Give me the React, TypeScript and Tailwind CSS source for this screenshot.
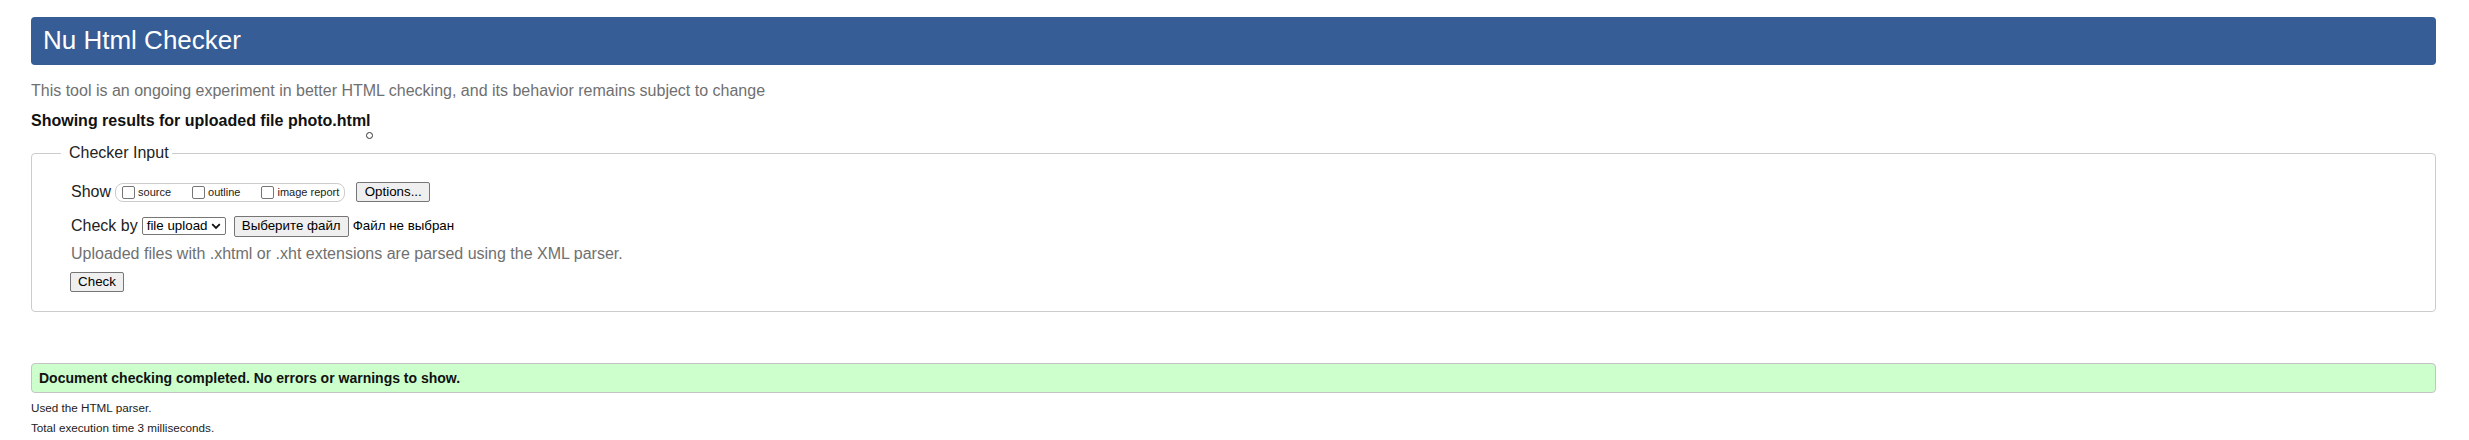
import React from "react";

function Checkbox() {
  return <span className="inline-block w-[13px] h-[13px] border border-[#767676] rounded-[2px] bg-white shrink-0" />;
}

function Btn({ children, className = "" }: { children: React.ReactNode; className?: string }) {
  return (
    <span
      className={
        "inline-flex items-center justify-center bg-[#efefef] border border-[#767676] rounded-[2px] text-[13.33px] text-black px-[7px] " +
        className
      }
    >
      {children}
    </span>
  );
}

export default function App() {
  return (
    <div className="relative min-h-[440px] bg-white pt-[17px] pl-[31px] pr-[33px] font-['Liberation_Sans',Arial,sans-serif] text-[#222]">
      <h1 className="h-[48px] flex items-center pb-[2px] pl-[12px] bg-[#365d95] rounded-[4px] text-white text-[26px] font-normal">
        Nu Html Checker
      </h1>
      <p className="mt-[16px] text-[16px] leading-[20px] text-[#707070]">
        This tool is an ongoing experiment in better HTML checking, and its behavior remains subject to change
      </p>
      <p className="mt-[10px] text-[16px] leading-[20px] font-bold text-[#111]">
        Showing results for uploaded file photo.html
      </p>

      <fieldset className="mt-[12px] p-0 border border-[#cccccc] rounded-[4px]">
        <legend className="ml-[29px] pl-[8px] pr-[3px] text-[16px] leading-[20px] text-[#222]">Checker Input</legend>
        <div className="pt-[17px] pl-[39px] pb-[19px] flex flex-col">
          <div className="h-[24px] flex items-center">
            <span className="text-[16px] text-[#222]">Show</span>
            <span className="ml-[4px] h-[19px] flex items-center border border-[#cccccc] rounded-[8px] pl-[6px] pr-[5px] text-[11px] text-[#222]">
              <span className="flex items-center gap-[3px]">
                <Checkbox />
                <span>source</span>
              </span>
              <span className="flex items-center gap-[3px] ml-[21px]">
                <Checkbox />
                <span>outline</span>
              </span>
              <span className="flex items-center gap-[3px] ml-[21px]">
                <Checkbox />
                <span>image report</span>
              </span>
            </span>
            <Btn className="ml-[11px] h-[20px] w-[74px]">Options...</Btn>
          </div>

          <div className="mt-[10px] h-[24px] flex items-center">
            <span className="text-[16px] text-[#222]">Check by</span>
            <span className="ml-[4px] h-[18px] w-[84px] flex items-center justify-between border border-[#767676] rounded-[2px] bg-white pl-[4px] pr-[4px] text-[13.33px] text-black">
              <span>file upload</span>
              <svg width="10" height="7" viewBox="0 0 10 7" className="shrink-0">
                <path d="M1.2 1.2 L5 5 L8.8 1.2" fill="none" stroke="#111" strokeWidth="1.8" />
              </svg>
            </span>
            <Btn className="ml-[8px] h-[21px] w-[115px]">Выберите файл</Btn>
            <span className="ml-[4px] text-[13.33px] text-black">Файл не выбран</span>
          </div>

          <div className="mt-[6px] h-[20px] flex items-center text-[16px] text-[#707070]">
            Uploaded files with .xhtml or .xht extensions are parsed using the XML parser.
          </div>

          <div className="mt-[8px] h-[20px] flex items-center">
            <Btn className="h-[20px] w-[54px] -ml-[1px]">Check</Btn>
          </div>
        </div>
      </fieldset>

      <div className="mt-[51px] h-[30px] flex items-center pl-[7px] bg-[#ccffcc] border border-[#c4c4c4] rounded-[4px] text-[14px] font-bold text-[#111]">
        Document checking completed. No errors or warnings to show.
      </div>
      <p className="mt-[5px] text-[11.7px] leading-[20px] text-[#222]">Used the HTML parser.</p>
      <p className="text-[11.7px] leading-[20px] text-[#222]">Total execution time 3 milliseconds.</p>

      <span className="absolute left-[366px] top-[132px] w-[7px] h-[7px] rounded-full border-[1.5px] border-[#333]" />
    </div>
  );
}
